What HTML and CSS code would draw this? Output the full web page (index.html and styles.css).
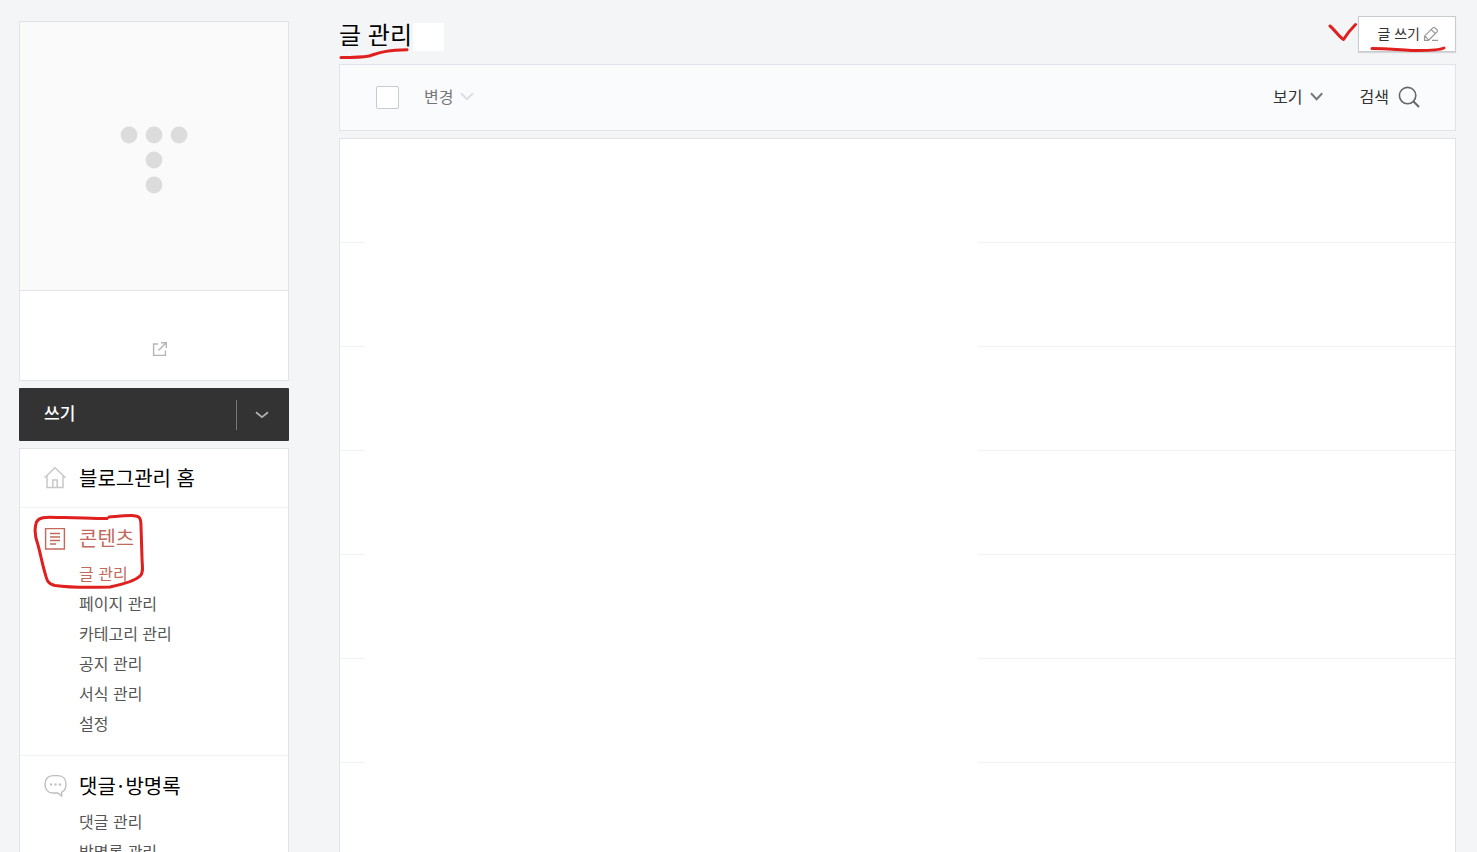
FILE: index.html
```html
<!DOCTYPE html>
<html lang="ko">
<head>
    <meta charset="UTF-8">
    <meta name="viewport" content="width=device-width, initial-scale=1.0">
    <title>글 관리</title>
    <link rel="stylesheet" href="styles.css">
</head>
<body>
    <div class="wrap">
        <aside class="sidebar">
            <div class="profile">
                <div class="profile-image">
                    <svg width="68" height="68" viewBox="0 0 68 68" fill="#dcdcdc">
                        <circle cx="9" cy="9" r="8.4"/>
                        <circle cx="34" cy="9" r="8.4"/>
                        <circle cx="59" cy="9" r="8.4"/>
                        <circle cx="34" cy="34" r="8.4"/>
                        <circle cx="34" cy="59" r="8.4"/>
                    </svg>
                </div>
                <div class="profile-info">
                    <a href="#" class="blog-link" aria-label="블로그 열기">
                        <svg width="16" height="16" viewBox="0 0 16 16" fill="none" stroke="#b5b5b5" stroke-width="1.4">
                            <path d="M6 3H1.600V14.400H13.400V9.600"/>
                            <path d="M9 1.700H14.300V7M14.200 1.800L6.400 9.600"/>
                        </svg>
                    </a>
                </div>
            </div>

            <div class="write-bar">
                <a href="#" class="write-link">쓰기</a>
                <button type="button" class="write-more" aria-label="더보기">
                    <svg width="14" height="8" viewBox="0 0 14 8" fill="none" stroke="#b0b0b0" stroke-width="1.8">
                        <path d="M1 1.2L7 6.2L13 1.2"/>
                    </svg>
                </button>
            </div>

            <nav class="menu">
                <div class="menu-group menu-home">
                    <a href="#" class="menu-title">
                        <svg class="menu-icon" width="24" height="24" viewBox="0 0 24 24" fill="none" stroke="#c8c8c8" stroke-width="1.5">
                            <path d="M1.500 11.800L12 1.800L22.500 11.800"/>
                            <path d="M4 9.800V21.600H20V9.800"/>
                            <path d="M9.800 21.500V14H14.200V21.500"/>
                        </svg>
                        블로그관리 홈
                    </a>
                </div>
                <div class="menu-group">
                    <a href="#" class="menu-title active">
                        <svg class="menu-icon" width="24" height="24" viewBox="0 0 24 24" fill="none" stroke="#c1695c" stroke-width="1.4">
                            <path d="M2.600 2.600H21.400V23H2.600Z"/>
                            <path d="M7 7.500H17M7 11H17M7 14.500H17M7 18H13"/>
                        </svg>
                        콘텐츠
                    </a>
                    <ul class="menu-list">
                        <li><a href="#" class="active">글 관리</a></li>
                        <li><a href="#">페이지 관리</a></li>
                        <li><a href="#">카테고리 관리</a></li>
                        <li><a href="#">공지 관리</a></li>
                        <li><a href="#">서식 관리</a></li>
                        <li><a href="#">설정</a></li>
                    </ul>
                    <svg class="pen pen-circle" width="114" height="78" viewBox="0 0 114 78">
                        <path d="M75 4.500C55 4.500 45 3 25 3.500C12 3 7 3 4.500 8C2 15 3 23 6 31C9 42 10 49 13 59C15 67 16 70 23 71.500C40 74 62 73.500 78 73C92 70 104 66 108 62C112 59 110 51 110 44L109 12C109 4 108 1.600 99 1.600C90 1.600 84 2.500 77 3"/>
                    </svg>
                </div>
                <div class="menu-group">
                    <a href="#" class="menu-title">
                        <svg class="menu-icon" width="24" height="24" viewBox="0 0 24 24" fill="none" stroke="#bdbdbd" stroke-width="1.4">
                            <path d="M10 1.600H15C20 1.600 23 5 23 10C23 14 21.500 17 18.600 18.200V21.800L14.500 19H10C5 19 2 15.500 2 10.300C2 5 5 1.600 10 1.600Z"/>
                            <path d="M7 10.400H9.200M11.400 10.400H13.600M15.800 10.400H18" stroke-width="2"/>
                        </svg>
                        <span>댓글<span class="dot">·</span>방명록</span>
                    </a>
                    <ul class="menu-list">
                        <li><a href="#">댓글 관리</a></li>
                        <li><a href="#">방명록 관리</a></li>
                    </ul>
                </div>
            </nav>
        </aside>

        <main class="content">
            <header class="content-head">
                <h1>
                    글 관리
                    <svg class="pen pen-title" width="72" height="12" viewBox="0 0 72 12">
                        <path d="M2 9.500C12 9.500 22 9.500 30 8C40 5 46 2 68 1.800"/>
                    </svg>
                </h1>
                <span class="count"></span>
                <button type="button" class="btn-write">
                    글 쓰기
                    <svg width="16" height="16" viewBox="0 0 16 16" fill="none" stroke="#999" stroke-width="1.2">
                        <path d="M1.500 14V10.200L10 1.700Q11 1 12 1.900L14.100 4Q14.800 5 14 5.900L5.500 14.300H1.500ZM8.300 3.600L12.200 7.500M9 14.400H15M2 10.200L5.600 13.800"/>
                    </svg>
                    <svg class="pen pen-check" width="30" height="22" viewBox="0 0 30 22">
                        <path d="M2 5C7 9 11 16 15.500 18.500C19 13 23 8 27.500 3.500"/>
                    </svg>
                    <svg class="pen pen-button" width="76" height="8" viewBox="0 0 76 8">
                        <path d="M2 3.500C22 3.500 28 5.200 42 5.400C56 5.600 68 5.800 74 3"/>
                    </svg>
                </button>
            </header>

            <div class="toolbar">
                <input type="checkbox" class="check-all" aria-label="전체 선택">
                <button type="button" class="tool tool-change">
                    변경
                    <svg width="14" height="9" viewBox="0 0 14 9" fill="none" stroke="#dcdee1" stroke-width="2">
                        <path d="M1 1.200L7 7.200L13 1.200"/>
                    </svg>
                </button>
                <button type="button" class="tool tool-view">
                    보기
                    <svg width="14" height="9" viewBox="0 0 14 9" fill="none" stroke="#777" stroke-width="2">
                        <path d="M1 1.200L6.600 7.200L12.200 1.200"/>
                    </svg>
                </button>
                <button type="button" class="tool tool-search">
                    검색
                    <svg width="22" height="22" viewBox="0 0 22 22" fill="none" stroke="#666" stroke-width="1.600">
                        <circle cx="9.600" cy="9.600" r="8.200"/>
                        <path d="M15.500 15.500L21 21" stroke-width="2"/>
                    </svg>
                </button>
            </div>

            <ul class="post-list">
                <li><span class="post-check"></span><span class="post-title"></span><span class="post-meta"></span></li>
                <li><span class="post-check"></span><span class="post-title"></span><span class="post-meta"></span></li>
                <li><span class="post-check"></span><span class="post-title"></span><span class="post-meta"></span></li>
                <li><span class="post-check"></span><span class="post-title"></span><span class="post-meta"></span></li>
                <li><span class="post-check"></span><span class="post-title"></span><span class="post-meta"></span></li>
                <li><span class="post-check"></span><span class="post-title"></span><span class="post-meta"></span></li>
                <li><span class="post-check"></span><span class="post-title"></span><span class="post-meta"></span></li>
            </ul>
        </main>
    </div>
</body>
</html>
```
FILE: styles.css
```css
* {
    box-sizing: border-box;
}

body {
    margin: 0;
    background-color: #f3f5f7;
    color: #000;
    font-family: 'Noto Sans CJK KR', sans-serif;
    font-size: 16px;
    line-height: 30px;
}

a {
    color: inherit;
    text-decoration: none;
}

ul {
    list-style: none;
    margin: 0;
    padding: 0;
}

button {
    font-family: inherit;
    cursor: pointer;
}

svg {
    display: block;
    flex: none;
}

.wrap {
    display: flex;
    gap: 50px;
    padding: 16px 21px 0 19px;
    height: 100vh;
    overflow: hidden; /* The panels run past the bottom edge */
}

/* Sidebar */
.sidebar {
    flex: none;
    width: 270px;
    padding-top: 5px;
}

.profile,
.menu,
.toolbar,
.post-list {
    border: 1px solid #e0e3e8;
    background-color: #fff;
}

.profile-image {
    display: flex;
    justify-content: center;
    padding: 104px 0 96px;
    border-bottom: 1px solid #e0e3e8;
    background-color: #fafafa;
}

.profile-info {
    padding: 50px 0 23px 132px;
}

.blog-link {
    display: block;
    width: 16px;
}

.write-bar {
    display: flex;
    align-items: center;
    height: 53px;
    margin: 7px 0;
    border-radius: 1px;
    background-color: #333;
}

.write-link {
    flex: 1;
    padding: 0 0 4px 25px;
    color: #fff;
    font-size: 17px;
    font-weight: 500;
}

.write-more {
    display: flex;
    align-items: center;
    justify-content: center;
    width: 53px;
    height: 30px;
    padding: 0 2px 0 0;
    border: 0;
    border-left: 1px solid #777;
    background: none;
}

.menu-group {
    position: relative;
    padding: 15px 0 17px 23px;
    border-bottom: 1px solid #f0f2f4;
}

.menu-home {
    padding: 14px 0 14px 23px;
}

.menu-title {
    display: flex;
    align-items: center;
    gap: 12px;
    font-size: 20px;
}

.dot {
    margin: 0 2px;
}

.menu-list {
    padding: 5px 0 0 36px;
    color: #555;
}

.menu-list a {
    display: block;
}

.menu .active {
    color: #c1695c;
}

/* Content */
.content {
    flex: 1;
    min-width: 0;
}

.content-head {
    display: flex;
    align-items: flex-start;
    height: 48px;
}

h1 {
    position: relative;
    margin: 0;
    font-size: 24px;
    font-weight: 400;
    line-height: 36px;
}

.count {
    width: 31px;
    height: 28px;
    margin: 7px 0 0 1px;
    background-color: #fff;
}

.btn-write {
    position: relative;
    display: flex;
    align-items: center;
    gap: 3px;
    height: 36px;
    margin-left: auto;
    padding: 0 16px 3px 18px;
    border: 1px solid #c8ccd2;
    background-color: #fff;
    box-shadow: 0 1px 1px rgba(0, 0, 0, 0.12);
    color: #333;
    font-size: 14px;
}

.btn-write svg {
    margin-top: 2px;
}

.toolbar {
    display: flex;
    align-items: center;
    height: 67px;
    margin-bottom: 7px;
    padding: 0 35px 0 36px;
    background-color: #fafbfd;
}

.check-all {
    appearance: none;
    width: 23px;
    height: 23px;
    margin: 0 25px 0 0;
    border: 1px solid #c6cad1;
    border-radius: 2px;
    background-color: #fff;
}

.tool {
    display: flex;
    align-items: center;
    gap: 7px;
    padding: 0 0 4px;
    border: 0;
    background: none;
    color: #333;
    font-size: 16px;
    line-height: 30px;
}

.tool svg {
    margin-top: 2px;
}

.tool-change {
    color: #777;
}

.tool-view {
    margin-left: auto;
}

.tool-search {
    gap: 9px;
    margin-left: 36px;
}

.post-list li {
    display: flex;
    height: 104px;
}

.post-check {
    width: 25px;
    border-bottom: 1px solid #f0f0f2;
}

.post-title {
    flex: 9;
}

.post-meta {
    flex: 7;
    border-bottom: 1px solid #f0f0f2;
}

/* Red pen marks */
.pen {
    position: absolute;
    fill: none;
    stroke: #e01f1f;
    stroke-width: 3;
    stroke-linecap: round;
    stroke-linejoin: round;
    pointer-events: none;
}

.pen-circle {
    top: 6px;
    left: 12px;
}

.pen-title {
    top: 32px;
    left: 0;
}

.pen-check {
    top: 2px;
    left: -31px;
}

.pen-button {
    top: 26px;
    left: 11px;
}
```
